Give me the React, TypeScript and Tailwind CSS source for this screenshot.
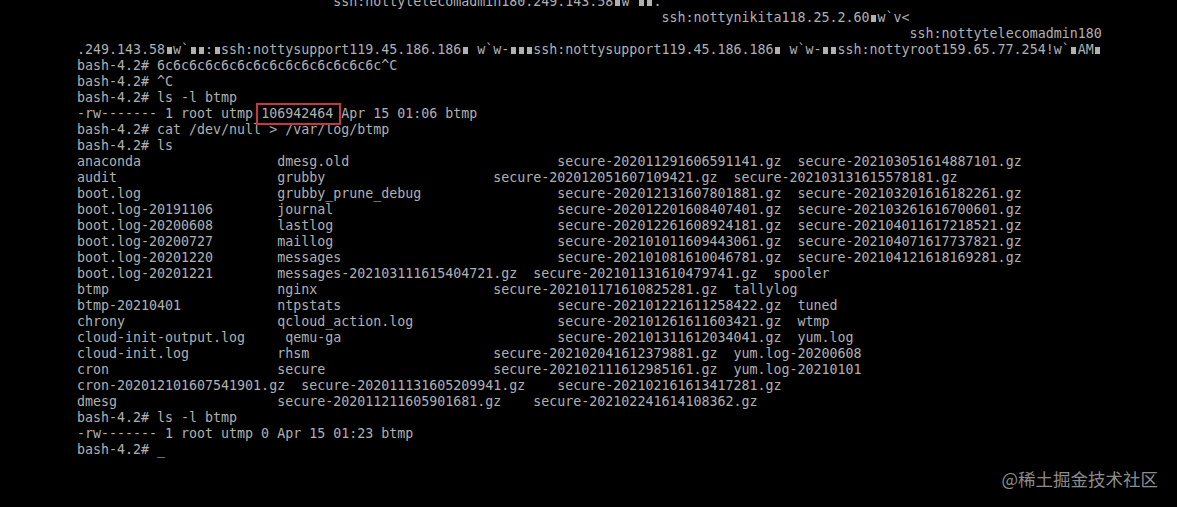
import React from "react";

type Cell = [number, string];

// build a fixed-column terminal row from [column, text] pairs
function row(cells: Cell[]): string {
  let s = "";
  for (const [col, text] of cells) {
    s = s.padEnd(col, " ") + text;
  }
  return s;
}

const lines: string[] = [
  row([[32, "ssh:nottytelecomadmin180.249.143.58■w ■■."]]),
  row([[73, "ssh:nottynikita118.25.2.60■w`v<"]]),
  row([[104, "ssh:nottytelecomadmin180"]]),
  ".249.143.58■w`■■:■ssh:nottysupport119.45.186.186■ w`w-■■■ssh:nottysupport119.45.186.186■ w`w-■■ssh:nottyroot159.65.77.254!w`■AM■",
  "bash-4.2# 6c6c6c6c6c6c6c6c6c6c6c6c6c6c^C",
  "bash-4.2# ^C",
  "bash-4.2# ls -l btmp",
  "__BOX__",
  "bash-4.2# cat /dev/null > /var/log/btmp",
  "bash-4.2# ls",
  row([[0, "anaconda"], [25, "dmesg.old"], [60, "secure-202011291606591141.gz"], [90, "secure-202103051614887101.gz"]]),
  row([[0, "audit"], [25, "grubby"], [52, "secure-202012051607109421.gz"], [82, "secure-202103131615578181.gz"]]),
  row([[0, "boot.log"], [25, "grubby_prune_debug"], [60, "secure-202012131607801881.gz"], [90, "secure-202103201616182261.gz"]]),
  row([[0, "boot.log-20191106"], [25, "journal"], [60, "secure-202012201608407401.gz"], [90, "secure-202103261616700601.gz"]]),
  row([[0, "boot.log-20200608"], [25, "lastlog"], [60, "secure-202012261608924181.gz"], [90, "secure-202104011617218521.gz"]]),
  row([[0, "boot.log-20200727"], [25, "maillog"], [60, "secure-202101011609443061.gz"], [90, "secure-202104071617737821.gz"]]),
  row([[0, "boot.log-20201220"], [25, "messages"], [60, "secure-202101081610046781.gz"], [90, "secure-202104121618169281.gz"]]),
  row([[0, "boot.log-20201221"], [25, "messages-202103111615404721.gz"], [57, "secure-202101131610479741.gz"], [87, "spooler"]]),
  row([[0, "btmp"], [25, "nginx"], [52, "secure-202101171610825281.gz"], [82, "tallylog"]]),
  row([[0, "btmp-20210401"], [25, "ntpstats"], [60, "secure-202101221611258422.gz"], [90, "tuned"]]),
  row([[0, "chrony"], [25, "qcloud_action.log"], [60, "secure-202101261611603421.gz"], [90, "wtmp"]]),
  row([[0, "cloud-init-output.log"], [26, "qemu-ga"], [60, "secure-202101311612034041.gz"], [90, "yum.log"]]),
  row([[0, "cloud-init.log"], [25, "rhsm"], [52, "secure-202102041612379881.gz"], [82, "yum.log-20200608"]]),
  row([[0, "cron"], [25, "secure"], [52, "secure-202102111612985161.gz"], [82, "yum.log-20210101"]]),
  row([[0, "cron-202012101607541901.gz"], [28, "secure-202011131605209941.gz"], [60, "secure-202102161613417281.gz"]]),
  row([[0, "dmesg"], [25, "secure-202011211605901681.gz"], [57, "secure-202102241614108362.gz"]]),
  "bash-4.2# ls -l btmp",
  "-rw------- 1 root utmp 0 Apr 15 01:23 btmp",
  "bash-4.2# _",
];

function Block() {
  return (
    <span className="inline-flex w-[8px] h-[16px] items-center justify-center align-top">
      <span className="w-[5px] h-[7px] bg-[#b0b0b0]" />
    </span>
  );
}

function TermText({ text }: { text: string }) {
  const parts = text.split("■");
  return (
    <>
      {parts.map((p, i) => (
        <React.Fragment key={i}>
          {p}
          {i < parts.length - 1 && <Block />}
        </React.Fragment>
      ))}
    </>
  );
}

function BoxedLine() {
  return (
    <div className="h-[16px] leading-[16px] whitespace-pre">
      {"-rw------- 1 root utmp "}
      <span className="relative inline-block h-[16px] align-top">
        106942464
        <span className="absolute left-[-5px] right-[-8px] top-[-3px] bottom-[-3px] border-2 border-[#c9363f]" />
      </span>
      {" Apr 15 01:06 btmp"}
    </div>
  );
}

export default function App() {
  return (
    <div className="relative w-[1177px] h-[507px] overflow-hidden bg-black">
      <div
        className="mt-[-6px] pl-[77px] text-[13.3px] text-[#b0b0b0]"
        style={{ fontFamily: '"DejaVu Sans Mono", "Liberation Mono", monospace' }}
      >
        {lines.map((l, i) =>
          l === "__BOX__" ? (
            <BoxedLine key={i} />
          ) : (
            <div key={i} className="h-[16px] leading-[16px] whitespace-pre">
              <TermText text={l} />
            </div>
          )
        )}
      </div>
      <div
        className="absolute right-[19px] top-[467px] text-[17.5px] leading-[24px] text-[#8c8c8c]"
        style={{ fontFamily: '"Noto Sans CJK SC", "Noto Sans", sans-serif' }}
      >
        @稀土掘金技术社区
      </div>
    </div>
  );
}
